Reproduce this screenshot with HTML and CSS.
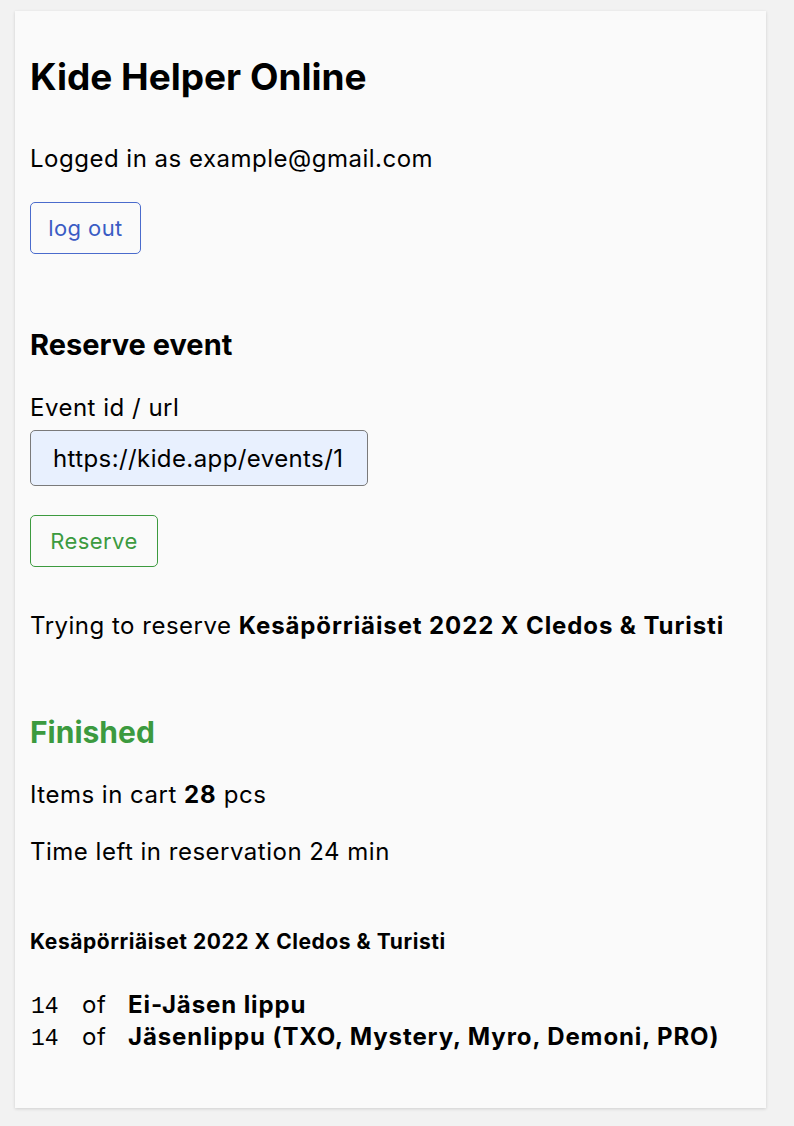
FILE: index.html
```html
<!DOCTYPE html>
<html lang="en">
<head>
<meta charset="utf-8">
<title>Kide Helper Online</title>
<link rel="stylesheet" href="styles.css">
</head>
<body>
<main class="card">
  <h1 class="title">Kide Helper Online</h1>
  <p class="text logged">Logged in as example@gmail.com</p>
  <button class="btn btn-blue">log out</button>

  <h2 class="section-title">Reserve event</h2>
  <label class="text label" for="event">Event id / url</label>
  <input id="event" class="input" type="text" value="https://kide.app/events/1">
  <button class="btn btn-green">Reserve</button>

  <p class="text trying">Trying to reserve <b>Kesäpörriäiset 2022 X Cledos &amp; Turisti</b></p>

  <h2 class="status">Finished</h2>
  <p class="text items">Items in cart <b>28</b> pcs</p>
  <p class="text time">Time left in reservation 24 min</p>

  <h4 class="event-name">Kesäpörriäiset 2022 X Cledos &amp; Turisti</h4>
  <div class="tickets">
    <span class="count">14</span><span class="of">of</span><span class="name">Ei-Jäsen lippu</span>
    <span class="count">14</span><span class="of">of</span><span class="name">Jäsenlippu (TXO, Mystery, Myro, Demoni, PRO)</span>
  </div>
</main>
</body>
</html>
```
FILE: styles.css
```css
html, body {
  margin: 0;
  padding: 0;
  background: #f2f2f2;
}
body {
  font-family: Inter, "Liberation Sans", sans-serif;
  color: #000;
  font-size: 24px;
  letter-spacing: 0.5px;
}
.card {
  background: #fafafa;
  margin: 11px 28px 18px 15px;
  padding: 44px 15px 55px 15px;
  box-shadow: 0 1px 3px rgba(0,0,0,0.15);
  display: flex;
  flex-direction: column;
  align-items: flex-start;
}
.title {
  font-size: 37px;
  font-weight: 700;
  line-height: 44px;
  letter-spacing: 0;
  margin: 0;
}
.text {
  margin: 0;
  line-height: 30px;
}
.logged { margin-top: 45px; }
.btn {
  font-family: Inter, "Liberation Sans", sans-serif;
  font-size: 22px;
  letter-spacing: 0.4px;
  background: transparent;
  border-radius: 5px;
  padding: 0;
  height: 52px;
  cursor: pointer;
}
.btn-blue {
  margin-top: 28px;
  color: #3a5cc4;
  border: 1px solid #4a6bcc;
  width: 111px;
}
.btn-green {
  margin-top: 29px;
  color: #3c9a3f;
  border: 1px solid #3c9a3f;
  width: 128px;
}
.section-title {
  font-size: 29px;
  font-weight: 700;
  margin: 74px 0 0;
  line-height: 34px;
  letter-spacing: 0;
}
.label { margin-top: 31px; display: block; }
.input {
  margin-top: 7px;
  width: 338px;
  height: 56px;
  box-sizing: border-box;
  background: #e8f0fe;
  border: 1px solid #7a7a7a;
  border-radius: 5px;
  padding: 0 22px;
  font-family: Inter, "Liberation Sans", sans-serif;
  font-size: 24px;
  letter-spacing: 0.4px;
  color: #000;
}
.trying { margin-top: 44px; }
b { font-weight: 700; letter-spacing: 0.9px; }
.status {
  color: #3c9a3f;
  font-size: 30px;
  font-weight: 700;
  margin: 73px 0 0;
  line-height: 36px;
  letter-spacing: 0;
}
.items { margin-top: 30px; }
.time { margin-top: 27px; }
.event-name {
  font-size: 21px;
  font-weight: 700;
  margin: 63px 0 0;
  line-height: 24px;
  letter-spacing: 0.55px;
}
.tickets {
  margin-top: 35px;
  display: grid;
  grid-template-columns: 52px 46px auto;
  grid-auto-rows: 32px;
  align-items: baseline;
  line-height: 32px;
}
.count {
  font-family: "Liberation Mono", monospace;
  font-size: 23px;
  letter-spacing: 0;
  padding-left: 1px;
}
.name { font-weight: 700; letter-spacing: 0.9px; }
```
